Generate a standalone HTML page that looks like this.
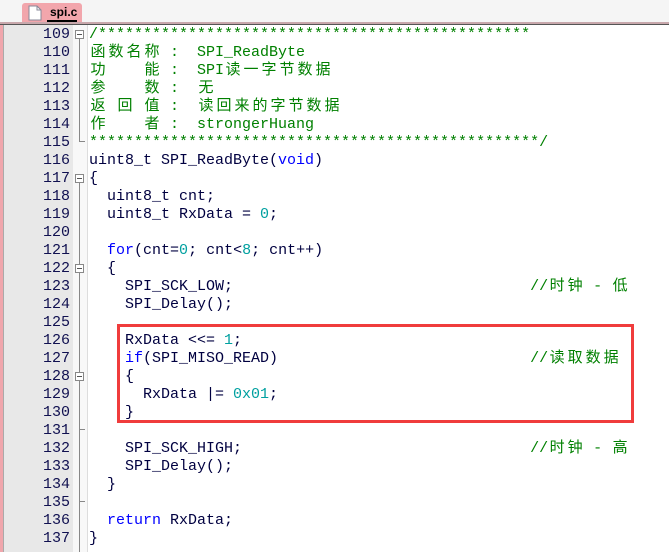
<!DOCTYPE html>
<html><head><meta charset="utf-8"><style>
body{margin:0;width:669px;height:552px;overflow:hidden;background:#fff;position:relative;font-family:"Liberation Mono","Noto Sans CJK SC",monospace;}
#top{position:absolute;left:0;top:0;width:669px;height:22px;background:#f5f5f5;}
#tabline{position:absolute;left:0;top:22px;width:669px;height:3px;background:#c8a8ac;border-bottom:1px solid #555;box-sizing:border-box;}
#tab{position:absolute;left:22px;top:3px;width:60px;height:20px;background:#f2a6ac;border-radius:3px 3px 0 0;}
#tab span{position:absolute;left:28px;top:2px;font:bold 12px "Liberation Sans",sans-serif;color:#000;}
#tab b{position:absolute;left:25px;top:17px;width:30px;height:2px;background:#000;}
#pinkl{position:absolute;left:0;top:25px;width:3px;height:527px;background:#f0a6ac;}
#gut{position:absolute;left:3px;top:25px;width:70px;height:527px;background:#e8e8e8;border-left:1px solid #aaa;}
#fold{position:absolute;left:73px;top:25px;width:14px;height:527px;background:#f8f8f8;border-right:1px solid #ddd;}
.ln,.cd{position:absolute;font-size:15px;line-height:18px;white-space:pre;}
.ln{left:0;width:70px;text-align:right;color:#101050;top:26px;}
.cd{left:89px;top:26px;color:#000040;}
i{font-style:normal;display:inline-block;width:18px;text-align:center;}
.c{color:#008000}.k{color:#0000ff}.n{color:#00a0a0}
.fb{position:absolute;left:75px;width:9px;height:9px;border:1px solid #888;background:#fff;box-sizing:border-box;}
.fb:after{content:"";position:absolute;left:1px;top:3px;width:5px;height:1px;background:#555;}
.vl{position:absolute;left:79px;width:1px;background:#888;}
.tk{position:absolute;left:79px;width:6px;height:1px;background:#888;}
#red{position:absolute;left:117px;top:324px;width:517px;height:99px;border:3px solid #f03c3c;box-sizing:border-box;}
</style></head><body>
<div id="top"></div>
<div id="tab"><svg width="14" height="16" style="position:absolute;left:6px;top:2px"><path d="M1 1h8l4 4v10H1z" fill="#fff" stroke="#889"/><path d="M9 1v4h4" fill="none" stroke="#889"/></svg><span>spi.c</span><b></b></div>
<div id="tabline"></div>
<div id="pinkl"></div>
<div id="gut"></div>
<div id="fold"></div>
<div class="ln">109
110
111
112
113
114
115
116
117
118
119
120
121
122
123
124
125
126
127
128
129
130
131
132
133
134
135
136
137</div>
<div class="fb" style="top:30px"></div>
<div class="vl" style="top:39px;height:102px"></div><div class="tk" style="top:141px"></div>
<div class="fb" style="top:174px"></div>
<div class="vl" style="top:183px;height:369px"></div>
<div class="fb" style="top:264px"></div>
<div class="fb" style="top:372px"></div>
<div class="tk" style="top:429px"></div>
<div class="tk" style="top:501px"></div>
<div class="cd"><span class="c">/************************************************
<i>函</i><i>数</i><i>名</i><i>称</i> :  SPI_ReadByte
<i>功</i>    <i>能</i> :  SPI<i>读</i><i>一</i><i>字</i><i>节</i><i>数</i><i>据</i>
<i>参</i>    <i>数</i> :  <i>无</i>
<i>返</i> <i>回</i> <i>值</i> :  <i>读</i><i>回</i><i>来</i><i>的</i><i>字</i><i>节</i><i>数</i><i>据</i>
<i>作</i>    <i>者</i> :  strongerHuang
**************************************************/</span>
uint8_t SPI_ReadByte(<span class="k">void</span>)
{
  uint8_t cnt;
  uint8_t RxData = <span class="n">0</span>;

  <span class="k">for</span>(cnt=<span class="n">0</span>; cnt&lt;<span class="n">8</span>; cnt++)
  {
    SPI_SCK_LOW;                                 <span class="c">//<i>时</i><i>钟</i> - <i>低</i></span>
    SPI_Delay();

    RxData &lt;&lt;= <span class="n">1</span>;
    <span class="k">if</span>(SPI_MISO_READ)                            <span class="c">//<i>读</i><i>取</i><i>数</i><i>据</i></span>
    {
      RxData |= <span class="n">0x01</span>;
    }

    SPI_SCK_HIGH;                                <span class="c">//<i>时</i><i>钟</i> - <i>高</i></span>
    SPI_Delay();
  }

  <span class="k">return</span> RxData;
}</div>
<div id="red"></div>
</body></html>
